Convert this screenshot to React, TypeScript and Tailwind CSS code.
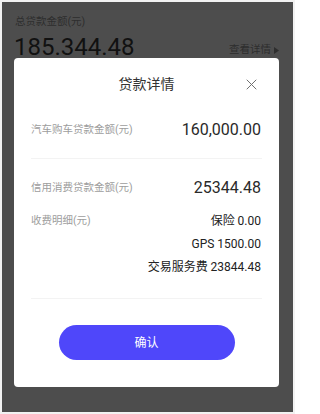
const FONT = "font-['Roboto','Noto_Sans_CJK_SC',sans-serif]";

const CloseIcon = () => (
  <svg width="11" height="11" viewBox="0 0 11 11" fill="none">
    <path d="M1 1L10 10M10 1L1 10" stroke="#707070" strokeWidth="1" strokeLinecap="round" />
  </svg>
);

const FeeRow = ({ children }: { children: React.ReactNode }) => (
  <div className="flex h-[23px] items-center justify-end text-[12px] text-[#222]">{children}</div>
);

export default function App() {
  return (
    <div className={`${FONT} h-[414px] w-[295px] bg-[#f2f2f2] p-[2px]`}>
      <div className="h-full w-full bg-[#4d4d4d] px-[12px]">
        {/* page behind the mask */}
        <div className="pl-[1px] pt-[12px] text-[10.5px] leading-[16px] text-[#2e2e2e]">总贷款金额(元)</div>
        <div className="mt-[6px] flex items-end justify-between">
          <span className="text-[24px] leading-[22px] text-[#111]">185.344.48</span>
          <span className="mb-[1px] mr-[2px] flex items-center gap-[3px] text-[10.5px] leading-[14px] text-[#2e2e2e]">
            查看详情
            <svg width="5" height="7" viewBox="0 0 5 7">
              <path d="M0 0L5 3.5L0 7Z" fill="#2e2e2e" />
            </svg>
          </span>
        </div>

        {/* modal */}
        <div className="relative w-[265px] rounded-[4px] bg-white px-[17px] pb-[27px]">
          <div className="flex h-[52px] items-center justify-center text-[14px] text-[#333]">贷款详情</div>
          <button className="absolute right-[22px] top-[21px]">
            <CloseIcon />
          </button>

          <div className="flex h-[40px] items-center justify-between">
            <span className="text-[10.5px] text-[#9d9d9d]">汽车购车贷款金额(元)</span>
            <span className="mr-[1px] text-[16px] text-[#2a2a2a]">160,000.00</span>
          </div>

          <div className="mt-[8px] h-px bg-[#f3f3f3]" />

          <div className="mt-[18px] flex h-[22px] items-center justify-between">
            <span className="text-[10.5px] text-[#9d9d9d]">信用消费贷款金额(元)</span>
            <span className="mr-[1px] text-[16px] text-[#2a2a2a]">25344.48</span>
          </div>

          <div className="mt-[10px] flex justify-between">
            <span className="flex h-[23px] items-center text-[10.5px] text-[#9d9d9d]">收费明细(元)</span>
            <div className="mr-[1px]">
              <FeeRow>保险 0.00</FeeRow>
              <FeeRow>GPS 1500.00</FeeRow>
              <FeeRow>交易服务费 23844.48</FeeRow>
            </div>
          </div>

          <div className="mt-[20px] h-px bg-[#f3f3f3]" />

          <button className="mx-auto mt-[26px] flex h-[35px] w-[176px] items-center justify-center rounded-full bg-[#4f47fa] text-[12px] text-white">
            确认
          </button>
        </div>
      </div>
    </div>
  );
}
